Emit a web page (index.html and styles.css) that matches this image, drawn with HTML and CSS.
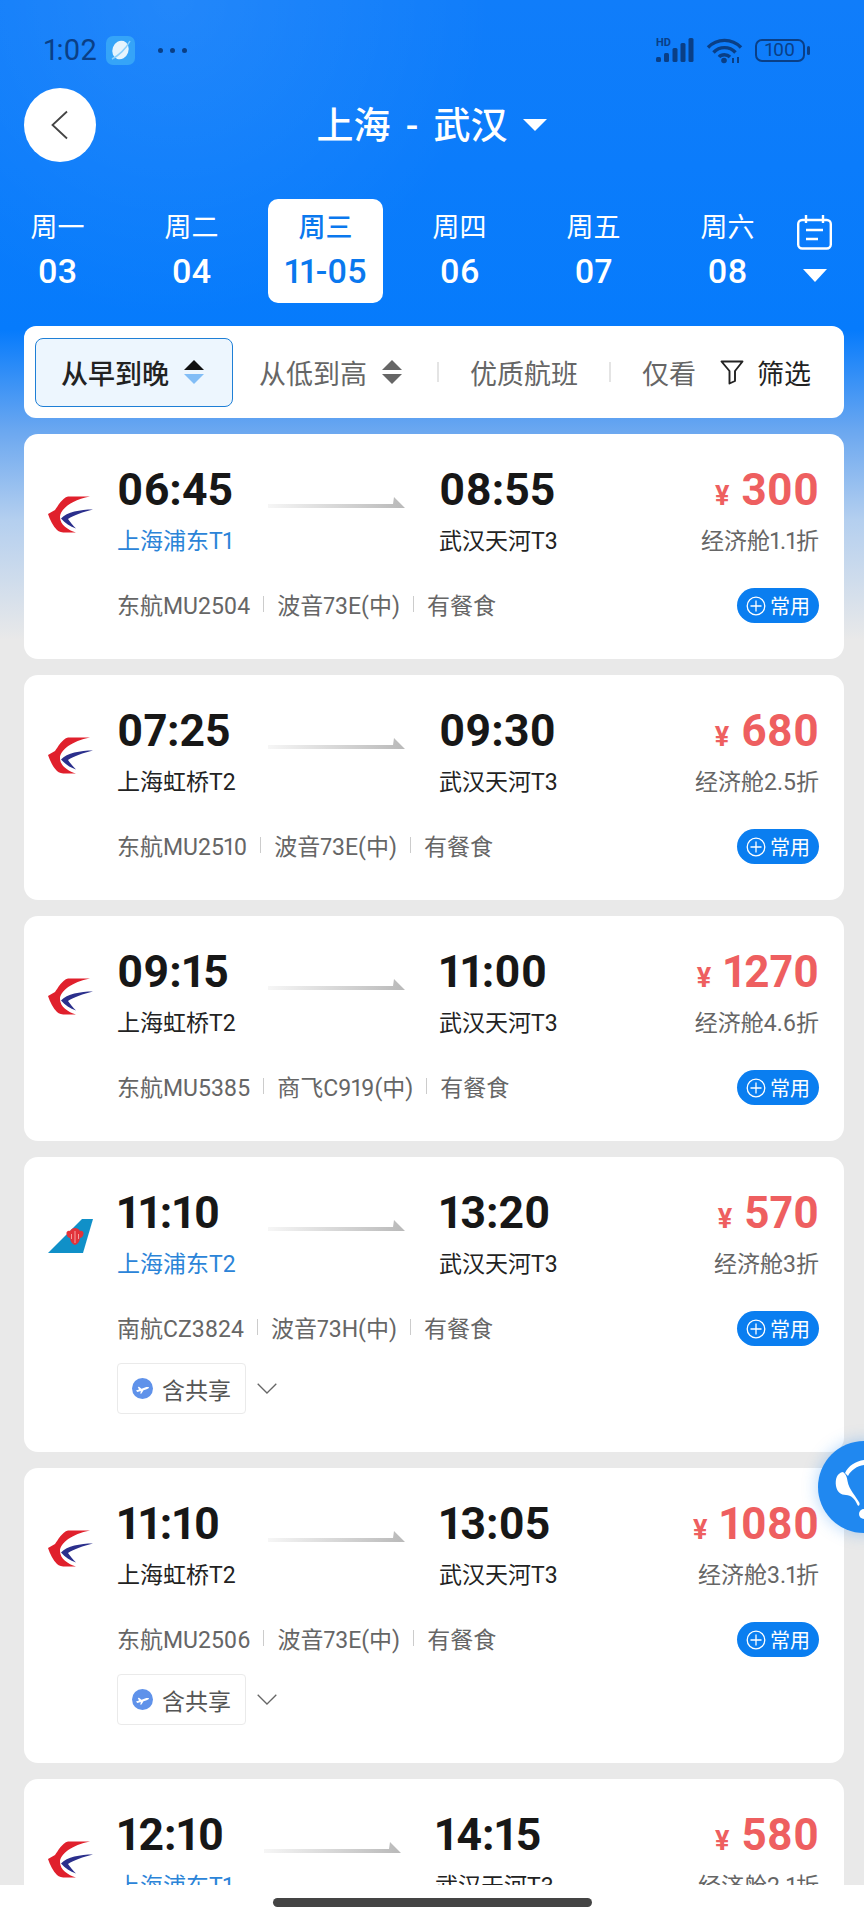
FILE: index.html
```html
<!DOCTYPE html>
<html lang="zh-CN">
<head>
    <meta charset="UTF-8">
    <meta name="viewport" content="width=device-width, initial-scale=1.0">
    <title>上海 - 武汉</title>
    <link rel="stylesheet" href="styles.css">
</head>
<body>

    <!-- shared icons -->
    <svg class="defs" width="0" height="0">
        <defs>
            <linearGradient id="arrowFade" x1="0" x2="1" y1="0" y2="0">
                <stop offset="0" stop-color="#f6f6f6"/>
                <stop offset="1" stop-color="#b9b9b9"/>
            </linearGradient>
            <symbol id="arrow" viewBox="0 0 137 12">
                <path d="M0 7H125L126 0L137 11H0Z" fill="url(#arrowFade)"/>
            </symbol>
            <symbol id="eastern" viewBox="0 0 45 37">
                <path d="M42 .5H20C14 2 10 10 7 14L0 18C2 24 5 30 9 34C11 36 14 36.500 18 36.500H28C20 34 12 29 12 21C12 13 24 4 42 .5Z" fill="#e0202c"/>
                <path d="M45 13.500C32 13.500 19 16 13 22.500C17 27 22 30.500 28 32.500C25 29.500 22 26 20 23C26 19 35 16 45 13.500Z" fill="#2b2f8c"/>
            </symbol>
            <symbol id="southern" viewBox="0 0 45 34">
                <path d="M0 34L34 0H45L35 34Z" fill="#1090c8"/>
                <path d="M27 9C29 9 31 10 32 12C34 11 36 13 35.500 15C35 18 33 19 32 19C32 22 30 25 27 26C24 25 22 22 22 19C21 19 19 18 18.500 15C18 13 20 11 22 12C23 10 25 9 27 9Z" fill="#e2323a"/>
                <path d="M27 12V24M23.500 15V20M30.500 15V20" stroke="#f4a0a0" stroke-width="1"/>
            </symbol>
            <symbol id="plus-circle" viewBox="0 0 20 20">
                <circle cx="10" cy="10" r="8.800" fill="none" stroke="#fff" stroke-width="1.300"/>
                <path d="M10 4.500V15.500M4.500 10H15.500" stroke="#fff" stroke-width="1.300"/>
            </symbol>
            <symbol id="share-plane" viewBox="0 0 21 21">
                <circle cx="10.500" cy="10.500" r="10.500" fill="#5f92ea"/>
                <path d="M4 12.500L7 11.500L5.800 9L7 8.700L9.500 10.800L13 9.500C14.500 9 16.500 8.800 17 9.500C17.200 10.300 15.500 11 14 11.500L11.500 12.300L9.500 15.500L8.300 15.800L8.800 13L5.300 14Z" fill="#fff"/>
            </symbol>
            <symbol id="chevron" viewBox="0 0 20 11">
                <path d="M.7 .7L10 10L19.300 .7" fill="none" stroke="#666" stroke-width="1.300"/>
            </symbol>
        </defs>
    </svg>

    <div class="page">
        <div class="status-bar">
            <span class="status-time">1:02</span>
            <svg class="status-app" viewBox="0 0 29 29">
                <rect width="29" height="29" rx="7" fill="#35a4f8"/>
                <ellipse cx="14.500" cy="14" rx="8" ry="9.500" fill="#e6f4fd" transform="rotate(20 14.500 14)"/>
                <path d="M6 23C12 20 20 13 24 5" stroke="#8cd0fb" stroke-width="1.500" fill="none"/>
            </svg>
            <span class="status-dots"><i></i><i></i><i></i></span>
            <span class="status-right">
                <svg class="status-signal" viewBox="0 0 40 26">
                    <text x="1" y="9" class="hd-text">HD</text>
                    <g fill="#0a3f86">
                        <rect x="1" y="20" width="5" height="5" rx="1.500"/>
                        <rect x="9" y="16" width="5" height="9" rx="1.500"/>
                        <rect x="17.500" y="11" width="5" height="14" rx="1.500"/>
                        <rect x="25.500" y="6" width="5" height="19" rx="1.500"/>
                        <rect x="33.500" y="1" width="5" height="24" rx="1.500"/>
                    </g>
                </svg>
                <svg class="status-wifi" viewBox="0 0 37 27">
                    <g fill="none" stroke="#0a3f86" stroke-width="3.400">
                        <path d="M2 10.500C11 1 26 1 35 10.500"/>
                        <path d="M7.500 15.500C13.500 9 23.500 9 29.500 15.500"/>
                        <path d="M13 20C15.500 17 21 17 24 20"/>
                    </g>
                    <circle cx="18" cy="23.500" r="2.800" fill="#0a3f86"/>
                    <path d="M27 26V21M32 20V26" stroke="#0a3f86" stroke-width="2"/>
                </svg>
                <span class="status-battery"><span class="battery-body">100</span><i class="battery-nub"></i></span>
            </span>
        </div>

        <div class="nav-bar">
            <div class="back-btn">
                <svg width="18" height="30" viewBox="0 0 18 30">
                    <path d="M16 1.500L1.500 15L16 28.500" fill="none" stroke="#444" stroke-width="1.800"/>
                </svg>
            </div>
            <div class="route-title">上海 - 武汉<i class="tri tri-title"></i></div>
        </div>

        <div class="date-row">
            <div class="date-tab"><span class="date-day">周一</span><span class="date-num">03</span></div>
            <div class="date-tab"><span class="date-day">周二</span><span class="date-num">04</span></div>
            <div class="date-tab active"><span class="date-day">周三</span><span class="date-num">11-05</span></div>
            <div class="date-tab"><span class="date-day">周四</span><span class="date-num">06</span></div>
            <div class="date-tab"><span class="date-day">周五</span><span class="date-num">07</span></div>
            <div class="date-tab"><span class="date-day">周六</span><span class="date-num">08</span></div>
            <div class="date-more">
                <svg width="35" height="35" viewBox="0 0 35 35">
                    <rect x="1.200" y="5" width="32.600" height="28.500" rx="4" fill="none" stroke="#fff" stroke-width="2.400"/>
                    <path d="M9 0V8M26 0V8M9 15H26M9 24H21" fill="none" stroke="#fff" stroke-width="2.400"/>
                </svg>
                <i class="tri tri-date"></i>
            </div>
        </div>

        <div class="filter-bar">
            <div class="filter-active">
                <span>从早到晚</span>
                <span class="sort sort-on"><i class="sort-up"></i><i class="sort-down"></i></span>
            </div>
            <div class="filter-item filter-price">
                <span>从低到高</span>
                <span class="sort"><i class="sort-up"></i><i class="sort-down"></i></span>
            </div>
            <i class="filter-line filter-line-first"></i>
            <div class="filter-item">优质航班</div>
            <i class="filter-line"></i>
            <div class="filter-item">仅看</div>
            <div class="filter-btn">
                <svg width="24" height="25" viewBox="0 0 24 25">
                    <path d="M1.500 1.500H22.500L15 11V21L9.500 23.500V11Z" fill="none" stroke="#222" stroke-width="1.900" stroke-linejoin="round"/>
                </svg>
                <span>筛选</span>
            </div>
        </div>

        <div class="flight-list">

            <div class="flight-card">
                <div class="airline-logo"><svg width="45" height="37"><use href="#eastern"/></svg></div>
                <div class="flight-body">
                    <div class="flight-top">
                        <div class="flight-dep"><div class="time">06:45</div><div class="city city-pudong">上海浦东T1</div></div>
                        <svg class="flight-arrow"><use href="#arrow"/></svg>
                        <div class="flight-arr"><div class="time">08:55</div><div class="city">武汉天河T3</div></div>
                        <div class="flight-price"><div class="price"><span class="yen">¥</span>300</div><div class="cabin">经济舱1.1折</div></div>
                    </div>
                    <div class="flight-info">
                        <span>东航MU2504</span><i class="info-line"></i><span>波音73E(中)</span><i class="info-line"></i><span>有餐食</span>
                        <span class="chip"><svg width="20" height="20"><use href="#plus-circle"/></svg>常用</span>
                    </div>
                </div>
            </div>

            <div class="flight-card">
                <div class="airline-logo"><svg width="45" height="37"><use href="#eastern"/></svg></div>
                <div class="flight-body">
                    <div class="flight-top">
                        <div class="flight-dep"><div class="time">07:25</div><div class="city">上海虹桥T2</div></div>
                        <svg class="flight-arrow"><use href="#arrow"/></svg>
                        <div class="flight-arr"><div class="time">09:30</div><div class="city">武汉天河T3</div></div>
                        <div class="flight-price"><div class="price"><span class="yen">¥</span>680</div><div class="cabin">经济舱2.5折</div></div>
                    </div>
                    <div class="flight-info">
                        <span>东航MU2510</span><i class="info-line"></i><span>波音73E(中)</span><i class="info-line"></i><span>有餐食</span>
                        <span class="chip"><svg width="20" height="20"><use href="#plus-circle"/></svg>常用</span>
                    </div>
                </div>
            </div>

            <div class="flight-card">
                <div class="airline-logo"><svg width="45" height="37"><use href="#eastern"/></svg></div>
                <div class="flight-body">
                    <div class="flight-top">
                        <div class="flight-dep"><div class="time">09:15</div><div class="city">上海虹桥T2</div></div>
                        <svg class="flight-arrow"><use href="#arrow"/></svg>
                        <div class="flight-arr"><div class="time">11:00</div><div class="city">武汉天河T3</div></div>
                        <div class="flight-price"><div class="price"><span class="yen">¥</span>1270</div><div class="cabin">经济舱4.6折</div></div>
                    </div>
                    <div class="flight-info">
                        <span>东航MU5385</span><i class="info-line"></i><span>商飞C919(中)</span><i class="info-line"></i><span>有餐食</span>
                        <span class="chip"><svg width="20" height="20"><use href="#plus-circle"/></svg>常用</span>
                    </div>
                </div>
            </div>

            <div class="flight-card">
                <div class="airline-logo"><svg width="45" height="34"><use href="#southern"/></svg></div>
                <div class="flight-body">
                    <div class="flight-top">
                        <div class="flight-dep"><div class="time">11:10</div><div class="city city-pudong">上海浦东T2</div></div>
                        <svg class="flight-arrow"><use href="#arrow"/></svg>
                        <div class="flight-arr"><div class="time">13:20</div><div class="city">武汉天河T3</div></div>
                        <div class="flight-price"><div class="price"><span class="yen">¥</span>570</div><div class="cabin">经济舱3折</div></div>
                    </div>
                    <div class="flight-info">
                        <span>南航CZ3824</span><i class="info-line"></i><span>波音73H(中)</span><i class="info-line"></i><span>有餐食</span>
                        <span class="chip"><svg width="20" height="20"><use href="#plus-circle"/></svg>常用</span>
                    </div>
                    <div class="share-row">
                        <span class="share-tag"><svg width="21" height="21"><use href="#share-plane"/></svg>含共享</span>
                        <svg class="share-more" width="20" height="11"><use href="#chevron"/></svg>
                    </div>
                </div>
            </div>

            <div class="flight-card">
                <div class="airline-logo"><svg width="45" height="37"><use href="#eastern"/></svg></div>
                <div class="flight-body">
                    <div class="flight-top">
                        <div class="flight-dep"><div class="time">11:10</div><div class="city">上海虹桥T2</div></div>
                        <svg class="flight-arrow"><use href="#arrow"/></svg>
                        <div class="flight-arr"><div class="time">13:05</div><div class="city">武汉天河T3</div></div>
                        <div class="flight-price"><div class="price"><span class="yen">¥</span>1080</div><div class="cabin">经济舱3.1折</div></div>
                    </div>
                    <div class="flight-info">
                        <span>东航MU2506</span><i class="info-line"></i><span>波音73E(中)</span><i class="info-line"></i><span>有餐食</span>
                        <span class="chip"><svg width="20" height="20"><use href="#plus-circle"/></svg>常用</span>
                    </div>
                    <div class="share-row">
                        <span class="share-tag"><svg width="21" height="21"><use href="#share-plane"/></svg>含共享</span>
                        <svg class="share-more" width="20" height="11"><use href="#chevron"/></svg>
                    </div>
                </div>
            </div>

            <div class="flight-card">
                <div class="airline-logo"><svg width="45" height="37"><use href="#eastern"/></svg></div>
                <div class="flight-body">
                    <div class="flight-top">
                        <div class="flight-dep flight-dep-short"><div class="time">12:10</div><div class="city city-pudong">上海浦东T1</div></div>
                        <svg class="flight-arrow"><use href="#arrow"/></svg>
                        <div class="flight-arr"><div class="time">14:15</div><div class="city">武汉天河T3</div></div>
                        <div class="flight-price"><div class="price"><span class="yen">¥</span>580</div><div class="cabin">经济舱2.1折</div></div>
                    </div>
                </div>
            </div>

        </div>

        <!-- floating service button -->
        <div class="float-btn">
            <svg width="46" height="92" viewBox="0 0 46 92">
                <path d="M27 32C30 25 38 20 46 19V24C39 25 33 29 30 35Z" fill="#fff"/>
                <path d="M25 31C19 32 17 38 18 45C19 51 23 54 28 54C33 54 37 58 39 63C40 66 42 65 41.500 62C38 55 31 49 29.500 40C29 36 28 33 25 31Z" fill="#fff"/>
                <circle cx="46" cy="73" r="5" fill="#fff"/>
            </svg>
        </div>

        <div class="home-bar"><i class="home-line"></i></div>
    </div>

</body>
</html>
```

FILE: styles.css
```css
* {
    box-sizing: border-box;
}
body {
    margin: 0;
    font-family: Roboto, "Noto Sans CJK SC", sans-serif;
    font-variant-numeric: proportional-nums;
    background-color: #e9e9e9;
}
i {
    display: block;
}
.defs {
    position: absolute;
}
.page {
    position: relative;
    width: 864px;
    height: 1920px;
    overflow: hidden;
    background:
        radial-gradient(circle at 20% 0, rgba(255, 255, 255, 0.08), rgba(255, 255, 255, 0) 320px),
        linear-gradient(180deg, #107dfa 0, #067bfc 330px, #6aa7f0 430px, #b4cfef 520px, #e9e9e9 640px);
}

/* status bar */
.status-bar {
    display: flex;
    align-items: center;
    height: 88px;
    padding: 20px 54px 8px 44px;
    color: #0a3f86;
}
.status-time {
    font-size: 29px;
    width: 62px;
}
.status-app {
    width: 29px;
    height: 29px;
}
.status-dots {
    display: flex;
    gap: 7px;
    margin-left: 23px;
}
.status-dots i {
    width: 5px;
    height: 5px;
    border-radius: 50%;
    background-color: #0a3f86;
}
.status-right {
    display: flex;
    align-items: center;
    margin-left: auto;
}
.status-signal {
    width: 40px;
    height: 26px;
}
.hd-text {
    font-size: 11px;
    font-weight: 700;
    fill: #0a3f86;
}
.status-wifi {
    width: 37px;
    height: 27px;
    margin-left: 11px;
}
.status-battery {
    display: flex;
    align-items: center;
    margin-left: 12px;
}
.battery-body {
    width: 50px;
    height: 23px;
    border: 2.5px solid #0a3f86;
    border-radius: 7px;
    font-size: 19px;
    line-height: 18px;
    text-align: center;
}
.battery-nub {
    width: 3px;
    height: 9px;
    margin-left: 2px;
    border-radius: 2px;
    background-color: #0a3f86;
}

/* title row */
.nav-bar {
    position: relative;
    display: flex;
    justify-content: center;
    height: 74px;
}
.back-btn {
    position: absolute;
    left: 24px;
    top: 0;
    display: flex;
    align-items: center;
    justify-content: center;
    width: 72px;
    height: 74px;
    border-radius: 50%;
    background-color: #fff;
}
.route-title {
    display: flex;
    align-items: center;
    gap: 16px;
    height: 69px;
    font-size: 37px;
    font-weight: 500;
    word-spacing: 6px;
    color: #fff;
    white-space: pre;
}
.tri {
    width: 0;
    height: 0;
    border-left: 12px solid transparent;
    border-right: 12px solid transparent;
    border-top: 12px solid #fff;
}
.tri-title {
    margin-top: 5px;
}

/* dates */
.date-row {
    display: flex;
    gap: 19px;
    height: 104px;
    margin-top: 37px;
}
.date-tab {
    display: flex;
    flex-direction: column;
    align-items: center;
    width: 115px;
    padding-top: 11px;
    border-radius: 10px;
    color: #fff;
}
.date-tab.active {
    background-color: #fff;
    color: #0a78ee;
    font-weight: 500;
}
.date-day {
    font-size: 27px;
    line-height: 36px;
}
.date-num {
    margin-top: 3px;
    font-size: 34px;
    line-height: 44px;
    font-weight: 500;
}
.date-more {
    display: flex;
    flex-direction: column;
    align-items: center;
    width: 35px;
    margin-left: -7px;
    padding-top: 16px;
}
.tri-date {
    margin-top: 19px;
    border-top-width: 13px;
}

/* sort and filter bar */
.filter-bar {
    display: flex;
    align-items: center;
    height: 92px;
    margin: 23px 20px 0 24px;
    padding: 0 11px;
    border-radius: 12px;
    background-color: #fff;
    font-size: 27px;
    color: #666;
}
.filter-active {
    display: flex;
    align-items: center;
    gap: 15px;
    width: 198px;
    height: 69px;
    padding-left: 25px;
    border: 1.5px solid #1e7fd6;
    border-radius: 8px;
    background-color: #edf6fe;
    font-weight: 500;
    color: #222;
}
.filter-item {
    display: flex;
    align-items: center;
    gap: 15px;
}
.filter-price {
    margin-left: 26px;
}
.filter-line {
    width: 2px;
    height: 20px;
    margin: 0 31px;
    background-color: #e4e4e4;
}
.filter-line-first {
    margin-left: 35px;
}
.filter-btn {
    display: flex;
    align-items: center;
    gap: 13px;
    margin-left: 24px;
    color: #222;
}
.sort {
    display: flex;
    flex-direction: column;
    gap: 4px;
}
.sort i {
    width: 0;
    height: 0;
    border-left: 10px solid transparent;
    border-right: 10px solid transparent;
}
.sort-up {
    border-bottom: 10px solid #666;
}
.sort-down {
    border-top: 10px solid #666;
}
.sort-on .sort-up {
    border-bottom-color: #111;
}
.sort-on .sort-down {
    border-top-color: #82bdf6;
}

/* flight cards */
.flight-list {
    display: flex;
    flex-direction: column;
    gap: 16px;
    margin: 16px 20px 0 24px;
}
.flight-card {
    display: flex;
    flex: none;
    padding: 28px 25px 38px 24px;
    border-radius: 14px;
    background-color: #fff;
}
.airline-logo {
    flex: none;
    width: 69px;
    margin-top: 34px;
    line-height: 0;
}
.flight-body {
    flex: 1;
    min-width: 0;
}
.flight-top {
    display: flex;
}
.flight-dep {
    width: 151px;
}
.flight-dep-short {
    width: 147px;
}
.flight-arrow {
    width: 137px;
    height: 12px;
    margin: 35px 34px 0 0;
}
.flight-price {
    flex: 1;
    text-align: right;
}
.time {
    font-size: 44.5px;
    line-height: 56px;
    font-weight: 700;
    color: #171717;
}
.city {
    margin-top: 8px;
    font-size: 23px;
    line-height: 32px;
    color: #222;
}
.city-pudong {
    color: #2b84d8;
}
.price {
    font-size: 44px;
    line-height: 56px;
    font-weight: 700;
    color: #ee5f60;
}
.yen {
    margin-right: 12px;
    font-size: 27px;
    line-height: 1;
}
.cabin {
    margin-top: 8px;
    font-size: 23px;
    line-height: 32px;
    color: #666;
}
.flight-info {
    display: flex;
    align-items: center;
    height: 35px;
    margin-top: 28px;
    font-size: 23px;
    color: #666;
}
.info-line {
    width: 1px;
    height: 16px;
    margin: 0 13px;
    background-color: #ccc;
}
.chip {
    display: flex;
    align-items: center;
    justify-content: center;
    gap: 4px;
    width: 82px;
    height: 35px;
    margin: 4px 0 0 auto;
    border-radius: 18px;
    background-color: #0a7ef0;
    font-size: 20px;
    color: #fff;
}
.share-row {
    display: flex;
    align-items: center;
    margin-top: 19px;
}
.share-tag {
    display: flex;
    align-items: center;
    gap: 9px;
    width: 129px;
    height: 51px;
    padding-left: 14px;
    border: 1px solid #eaeaea;
    border-radius: 4px;
    font-size: 23px;
    color: #555;
}
.share-more {
    margin-left: 11px;
}

/* things lying over the list */
.float-btn {
    position: absolute;
    left: 818px;
    top: 1441px;
    width: 92px;
    height: 92px;
    border-radius: 50%;
    background-color: #2088f0;
    box-shadow: 0 0 16px rgba(32, 136, 240, 0.35);
}
.float-btn svg {
    display: block;
}
.home-bar {
    position: absolute;
    left: 0;
    bottom: 0;
    display: flex;
    justify-content: center;
    width: 100%;
    height: 35px;
    padding-top: 13px;
    background-color: #fff;
}
.home-line {
    width: 319px;
    height: 9px;
    border-radius: 5px;
    background-color: #444;
}
```
